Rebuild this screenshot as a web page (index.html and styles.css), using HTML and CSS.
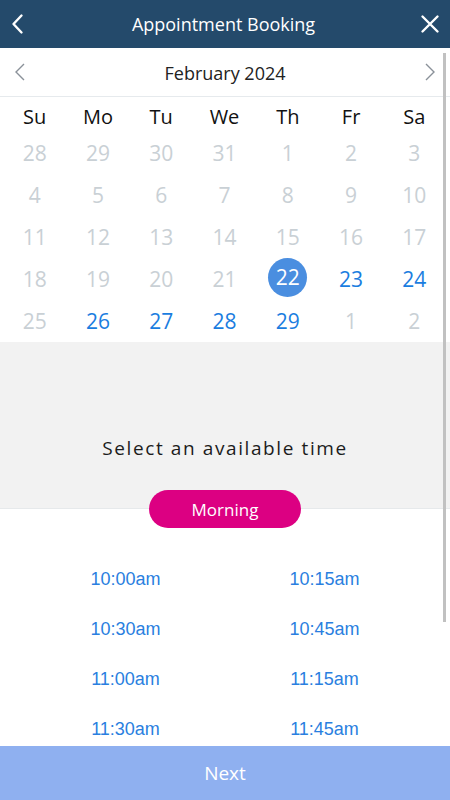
FILE: index.html
```html
<!DOCTYPE html>
<html>
<head>
<meta charset="utf-8">
<link rel="stylesheet" href="styles.css">
</head>
<body>
<div class="app">
  <header class="topbar">
    <svg class="top-icon back" width="24" height="24" viewBox="0 0 24 24"><path d="M16.5 3.5 L8.5 12 L16.5 20.5" fill="none" stroke="#fff" stroke-width="2.4" stroke-linecap="round" stroke-linejoin="round"/></svg>
    <h1 class="title">Appointment Booking</h1>
    <svg class="top-icon close" width="24" height="24" viewBox="0 0 24 24"><path d="M4.5 4.5 L19.5 19.5 M19.5 4.5 L4.5 19.5" fill="none" stroke="#fff" stroke-width="2.4" stroke-linecap="round"/></svg>
  </header>

  <main class="scroll">
    <div class="month-row">
      <svg class="mchev" width="12" height="18" viewBox="0 0 12 18"><path d="M10 1 L2 9 L10 17" fill="none" stroke="#8a9199" stroke-width="1.4"/></svg>
      <span class="month">February 2024</span>
      <svg class="mchev" width="12" height="18" viewBox="0 0 12 18"><path d="M2 1 L10 9 L2 17" fill="none" stroke="#8a9199" stroke-width="1.4"/></svg>
    </div>

    <div class="cal">
      <div class="wd">Su</div><div class="wd">Mo</div><div class="wd">Tu</div><div class="wd">We</div><div class="wd">Th</div><div class="wd">Fr</div><div class="wd">Sa</div>

      <div class="d off">28</div><div class="d off">29</div><div class="d off">30</div><div class="d off">31</div><div class="d off">1</div><div class="d off">2</div><div class="d off">3</div>
      <div class="d off">4</div><div class="d off">5</div><div class="d off">6</div><div class="d off">7</div><div class="d off">8</div><div class="d off">9</div><div class="d off">10</div>
      <div class="d off">11</div><div class="d off">12</div><div class="d off">13</div><div class="d off">14</div><div class="d off">15</div><div class="d off">16</div><div class="d off">17</div>
      <div class="d off">18</div><div class="d off">19</div><div class="d off">20</div><div class="d off">21</div><div class="d"><span class="sel">22</span></div><div class="d on">23</div><div class="d on">24</div>
      <div class="d off">25</div><div class="d on">26</div><div class="d on">27</div><div class="d on">28</div><div class="d on">29</div><div class="d off">1</div><div class="d off">2</div>
    </div>

    <section class="prompt">
      <p class="prompt-text">Select an available time</p>
    </section>
    <div class="pill-wrap"><span class="pill">Morning</span></div>

    <div class="times">
      <div class="t">10:00am</div><div class="t">10:15am</div>
      <div class="t">10:30am</div><div class="t">10:45am</div>
      <div class="t">11:00am</div><div class="t">11:15am</div>
      <div class="t">11:30am</div><div class="t">11:45am</div>
    </div>

    <div class="thumb"></div>
  </main>

  <footer class="next">Next</footer>
</div>
</body>
</html>
```

FILE: styles.css
```css
* { box-sizing: border-box; }
html, body { margin: 0; padding: 0; }
body {
  width: 450px;
  height: 800px;
  overflow: hidden;
  background: #fff;
  font-family: "Open Sans", "Noto Sans", sans-serif;
}
.app {
  display: flex;
  flex-direction: column;
  height: 800px;
}
.topbar {
  height: 48px;
  flex: none;
  background: #244a6b;
  display: flex;
  align-items: center;
  justify-content: space-between;
  padding: 0 8px 0 5px;
}
.top-icon { display: block; }
.title {
  margin: 0;
  color: #fff;
  font-weight: 400;
  font-size: 18px;
  line-height: 48px;
}
.scroll {
  flex: 1;
  position: relative;
  overflow: hidden;
}
.month-row {
  height: 49px;
  border-bottom: 1px solid #e6eaed;
  display: flex;
  align-items: center;
  justify-content: space-between;
  padding: 0 14px 0 14px;
}
.mchev { display: block; }
.month {
  font-size: 18px;
  color: #222;
  padding-top: 2px;
}
.cal {
  display: grid;
  grid-template-columns: repeat(7, 1fr);
  padding: 0 4px 0 3px;
}
.wd {
  text-align: center;
  font-size: 20px;
  color: #111;
  height: 35px;
  padding-top: 5px;
  line-height: 30px;
}
.d {
  height: 42px;
  line-height: 42px;
  text-align: center;
  font-size: 21px;
  display: flex;
  align-items: center;
  justify-content: center;
}
.off { color: #c9d0d5; }
.on { color: #1a7de0; }
.sel {
  width: 39px;
  height: 39px;
  border-radius: 50%;
  background: #4a8ee0;
  color: #fff;
  line-height: 39px;
  text-align: center;
  margin-top: -3px;
}
.prompt {
  height: 167px;
  background: #f2f2f2;
  border-bottom: 1px solid #e6e9eb;
  padding-top: 92px;
}
.prompt-text {
  margin: 0;
  text-align: center;
  font-size: 19px;
  letter-spacing: 1.6px;
  color: #1c1c1c;
  line-height: 28px;
}
.pill-wrap {
  display: flex;
  justify-content: center;
  margin-top: -19px;
}
.pill {
  width: 152px;
  height: 38px;
  border-radius: 19px;
  background: #dc0082;
  color: #fff;
  font-size: 17px;
  line-height: 40px;
  text-align: center;
}
.times {
  display: grid;
  grid-template-columns: 1fr 1fr;
  padding: 26px 26px 0 26px;
}
.t {
  height: 50px;
  line-height: 50px;
  text-align: center;
  font-family: "Liberation Sans", Arial, sans-serif;
  font-size: 18px;
  color: #2a7fe0;
}
.thumb {
  position: absolute;
  left: 443px;
  top: 5px;
  width: 3px;
  height: 569px;
  background: #c1c1c1;
}
.next {
  height: 54px;
  flex: none;
  background: #8fb0f0;
  color: #fff;
  font-size: 19px;
  line-height: 54px;
  text-align: center;
}
```
